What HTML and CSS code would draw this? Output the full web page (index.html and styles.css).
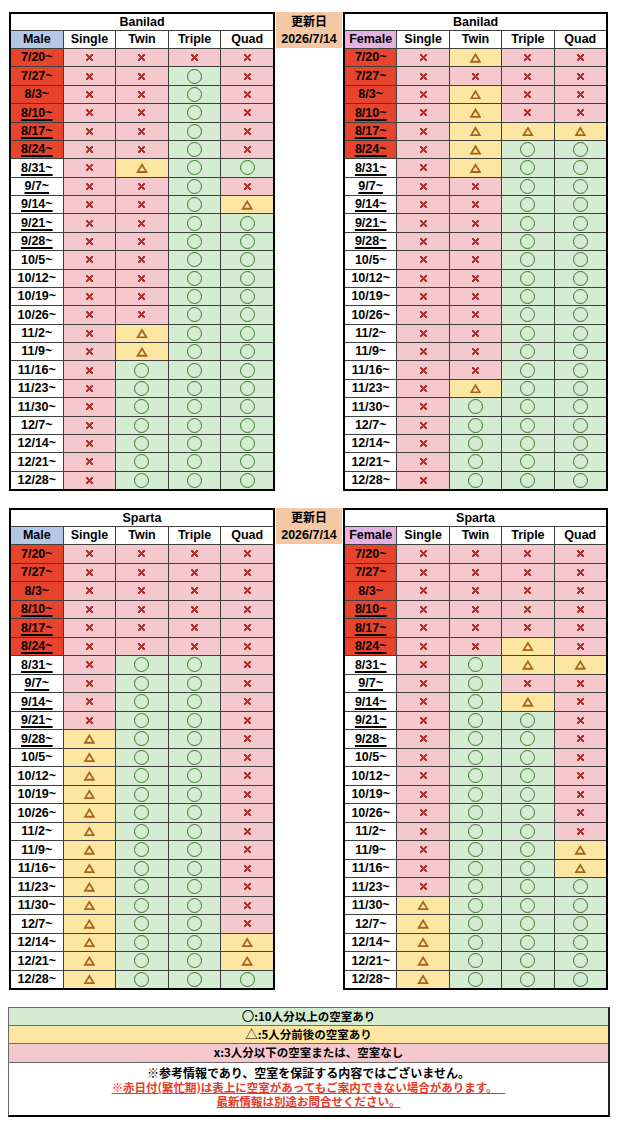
FILE: index.html
```html
<!DOCTYPE html>
<html lang="ja">
<head>
<meta charset="utf-8">
<title>空室状況</title>
<link rel="stylesheet" href="styles.css">
</head>
<body>
<div class="page">
  <div class="sec">
    <div class="tbl">
      <b class="ttl">Banilad</b>
      <b class="male">Male</b><b>Single</b><b>Twin</b><b>Triple</b><b>Quad</b>
      <b class="d rd">7/20~</b><i class="x"></i><i class="x"></i><i class="x"></i><i class="x"></i>
      <b class="d rd">7/27~</b><i class="x"></i><i class="x"></i><i class="o"></i><i class="x"></i>
      <b class="d rd">8/3~</b><i class="x"></i><i class="x"></i><i class="o"></i><i class="x"></i>
      <b class="d rd u">8/10~</b><i class="x"></i><i class="x"></i><i class="o"></i><i class="x"></i>
      <b class="d rd u">8/17~</b><i class="x"></i><i class="x"></i><i class="o"></i><i class="x"></i>
      <b class="d rd u">8/24~</b><i class="x"></i><i class="x"></i><i class="o"></i><i class="x"></i>
      <b class="d u">8/31~</b><i class="x"></i><i class="t"></i><i class="o"></i><i class="o"></i>
      <b class="d u">9/7~</b><i class="x"></i><i class="x"></i><i class="o"></i><i class="x"></i>
      <b class="d u">9/14~</b><i class="x"></i><i class="x"></i><i class="o"></i><i class="t"></i>
      <b class="d u">9/21~</b><i class="x"></i><i class="x"></i><i class="o"></i><i class="o"></i>
      <b class="d u">9/28~</b><i class="x"></i><i class="x"></i><i class="o"></i><i class="o"></i>
      <b class="d">10/5~</b><i class="x"></i><i class="x"></i><i class="o"></i><i class="o"></i>
      <b class="d">10/12~</b><i class="x"></i><i class="x"></i><i class="o"></i><i class="o"></i>
      <b class="d">10/19~</b><i class="x"></i><i class="x"></i><i class="o"></i><i class="o"></i>
      <b class="d">10/26~</b><i class="x"></i><i class="x"></i><i class="o"></i><i class="o"></i>
      <b class="d">11/2~</b><i class="x"></i><i class="t"></i><i class="o"></i><i class="o"></i>
      <b class="d">11/9~</b><i class="x"></i><i class="t"></i><i class="o"></i><i class="o"></i>
      <b class="d">11/16~</b><i class="x"></i><i class="o"></i><i class="o"></i><i class="o"></i>
      <b class="d">11/23~</b><i class="x"></i><i class="o"></i><i class="o"></i><i class="o"></i>
      <b class="d">11/30~</b><i class="x"></i><i class="o"></i><i class="o"></i><i class="o"></i>
      <b class="d">12/7~</b><i class="x"></i><i class="o"></i><i class="o"></i><i class="o"></i>
      <b class="d">12/14~</b><i class="x"></i><i class="o"></i><i class="o"></i><i class="o"></i>
      <b class="d">12/21~</b><i class="x"></i><i class="o"></i><i class="o"></i><i class="o"></i>
      <b class="d">12/28~</b><i class="x"></i><i class="o"></i><i class="o"></i><i class="o"></i>
    </div>
    <div class="upd"><span class="jp">更新日</span><span>2026/7/14</span></div>
    <div class="tbl rt">
      <b class="ttl">Banilad</b>
      <b class="female">Female</b><b>Single</b><b>Twin</b><b>Triple</b><b>Quad</b>
      <b class="d rd">7/20~</b><i class="x"></i><i class="t"></i><i class="x"></i><i class="x"></i>
      <b class="d rd">7/27~</b><i class="x"></i><i class="x"></i><i class="x"></i><i class="x"></i>
      <b class="d rd">8/3~</b><i class="x"></i><i class="t"></i><i class="x"></i><i class="x"></i>
      <b class="d rd u">8/10~</b><i class="x"></i><i class="t"></i><i class="x"></i><i class="x"></i>
      <b class="d rd u">8/17~</b><i class="x"></i><i class="t"></i><i class="t"></i><i class="t"></i>
      <b class="d rd u">8/24~</b><i class="x"></i><i class="t"></i><i class="o"></i><i class="o"></i>
      <b class="d u">8/31~</b><i class="x"></i><i class="t"></i><i class="o"></i><i class="o"></i>
      <b class="d u">9/7~</b><i class="x"></i><i class="x"></i><i class="o"></i><i class="o"></i>
      <b class="d u">9/14~</b><i class="x"></i><i class="x"></i><i class="o"></i><i class="o"></i>
      <b class="d u">9/21~</b><i class="x"></i><i class="x"></i><i class="o"></i><i class="o"></i>
      <b class="d u">9/28~</b><i class="x"></i><i class="x"></i><i class="o"></i><i class="o"></i>
      <b class="d">10/5~</b><i class="x"></i><i class="x"></i><i class="o"></i><i class="o"></i>
      <b class="d">10/12~</b><i class="x"></i><i class="x"></i><i class="o"></i><i class="o"></i>
      <b class="d">10/19~</b><i class="x"></i><i class="x"></i><i class="o"></i><i class="o"></i>
      <b class="d">10/26~</b><i class="x"></i><i class="x"></i><i class="o"></i><i class="o"></i>
      <b class="d">11/2~</b><i class="x"></i><i class="x"></i><i class="o"></i><i class="o"></i>
      <b class="d">11/9~</b><i class="x"></i><i class="x"></i><i class="o"></i><i class="o"></i>
      <b class="d">11/16~</b><i class="x"></i><i class="x"></i><i class="o"></i><i class="o"></i>
      <b class="d">11/23~</b><i class="x"></i><i class="t"></i><i class="o"></i><i class="o"></i>
      <b class="d">11/30~</b><i class="x"></i><i class="o"></i><i class="o"></i><i class="o"></i>
      <b class="d">12/7~</b><i class="x"></i><i class="o"></i><i class="o"></i><i class="o"></i>
      <b class="d">12/14~</b><i class="x"></i><i class="o"></i><i class="o"></i><i class="o"></i>
      <b class="d">12/21~</b><i class="x"></i><i class="o"></i><i class="o"></i><i class="o"></i>
      <b class="d">12/28~</b><i class="x"></i><i class="o"></i><i class="o"></i><i class="o"></i>
    </div>
  </div>

  <div class="sec sec2">
    <div class="tbl">
      <b class="ttl">Sparta</b>
      <b class="male">Male</b><b>Single</b><b>Twin</b><b>Triple</b><b>Quad</b>
      <b class="d rd">7/20~</b><i class="x"></i><i class="x"></i><i class="x"></i><i class="x"></i>
      <b class="d rd">7/27~</b><i class="x"></i><i class="x"></i><i class="x"></i><i class="x"></i>
      <b class="d rd">8/3~</b><i class="x"></i><i class="x"></i><i class="x"></i><i class="x"></i>
      <b class="d rd u">8/10~</b><i class="x"></i><i class="x"></i><i class="x"></i><i class="x"></i>
      <b class="d rd u">8/17~</b><i class="x"></i><i class="x"></i><i class="x"></i><i class="x"></i>
      <b class="d rd u">8/24~</b><i class="x"></i><i class="x"></i><i class="x"></i><i class="x"></i>
      <b class="d u">8/31~</b><i class="x"></i><i class="o"></i><i class="o"></i><i class="x"></i>
      <b class="d u">9/7~</b><i class="x"></i><i class="o"></i><i class="o"></i><i class="x"></i>
      <b class="d u">9/14~</b><i class="x"></i><i class="o"></i><i class="o"></i><i class="x"></i>
      <b class="d u">9/21~</b><i class="x"></i><i class="o"></i><i class="o"></i><i class="x"></i>
      <b class="d u">9/28~</b><i class="t"></i><i class="o"></i><i class="o"></i><i class="x"></i>
      <b class="d">10/5~</b><i class="t"></i><i class="o"></i><i class="o"></i><i class="x"></i>
      <b class="d">10/12~</b><i class="t"></i><i class="o"></i><i class="o"></i><i class="x"></i>
      <b class="d">10/19~</b><i class="t"></i><i class="o"></i><i class="o"></i><i class="x"></i>
      <b class="d">10/26~</b><i class="t"></i><i class="o"></i><i class="o"></i><i class="x"></i>
      <b class="d">11/2~</b><i class="t"></i><i class="o"></i><i class="o"></i><i class="x"></i>
      <b class="d">11/9~</b><i class="t"></i><i class="o"></i><i class="o"></i><i class="x"></i>
      <b class="d">11/16~</b><i class="t"></i><i class="o"></i><i class="o"></i><i class="x"></i>
      <b class="d">11/23~</b><i class="t"></i><i class="o"></i><i class="o"></i><i class="x"></i>
      <b class="d">11/30~</b><i class="t"></i><i class="o"></i><i class="o"></i><i class="x"></i>
      <b class="d">12/7~</b><i class="t"></i><i class="o"></i><i class="o"></i><i class="x"></i>
      <b class="d">12/14~</b><i class="t"></i><i class="o"></i><i class="o"></i><i class="t"></i>
      <b class="d">12/21~</b><i class="t"></i><i class="o"></i><i class="o"></i><i class="t"></i>
      <b class="d">12/28~</b><i class="t"></i><i class="o"></i><i class="o"></i><i class="o"></i>
    </div>
    <div class="upd"><span class="jp">更新日</span><span>2026/7/14</span></div>
    <div class="tbl rt">
      <b class="ttl">Sparta</b>
      <b class="female">Female</b><b>Single</b><b>Twin</b><b>Triple</b><b>Quad</b>
      <b class="d rd">7/20~</b><i class="x"></i><i class="x"></i><i class="x"></i><i class="x"></i>
      <b class="d rd">7/27~</b><i class="x"></i><i class="x"></i><i class="x"></i><i class="x"></i>
      <b class="d rd">8/3~</b><i class="x"></i><i class="x"></i><i class="x"></i><i class="x"></i>
      <b class="d rd u">8/10~</b><i class="x"></i><i class="x"></i><i class="x"></i><i class="x"></i>
      <b class="d rd u">8/17~</b><i class="x"></i><i class="x"></i><i class="x"></i><i class="x"></i>
      <b class="d rd u">8/24~</b><i class="x"></i><i class="x"></i><i class="t"></i><i class="x"></i>
      <b class="d u">8/31~</b><i class="x"></i><i class="o"></i><i class="t"></i><i class="t"></i>
      <b class="d u">9/7~</b><i class="x"></i><i class="o"></i><i class="x"></i><i class="x"></i>
      <b class="d u">9/14~</b><i class="x"></i><i class="o"></i><i class="t"></i><i class="x"></i>
      <b class="d u">9/21~</b><i class="x"></i><i class="o"></i><i class="o"></i><i class="x"></i>
      <b class="d u">9/28~</b><i class="x"></i><i class="o"></i><i class="o"></i><i class="x"></i>
      <b class="d">10/5~</b><i class="x"></i><i class="o"></i><i class="o"></i><i class="x"></i>
      <b class="d">10/12~</b><i class="x"></i><i class="o"></i><i class="o"></i><i class="x"></i>
      <b class="d">10/19~</b><i class="x"></i><i class="o"></i><i class="o"></i><i class="x"></i>
      <b class="d">10/26~</b><i class="x"></i><i class="o"></i><i class="o"></i><i class="x"></i>
      <b class="d">11/2~</b><i class="x"></i><i class="o"></i><i class="o"></i><i class="x"></i>
      <b class="d">11/9~</b><i class="x"></i><i class="o"></i><i class="o"></i><i class="t"></i>
      <b class="d">11/16~</b><i class="x"></i><i class="o"></i><i class="o"></i><i class="t"></i>
      <b class="d">11/23~</b><i class="x"></i><i class="o"></i><i class="o"></i><i class="o"></i>
      <b class="d">11/30~</b><i class="t"></i><i class="o"></i><i class="o"></i><i class="o"></i>
      <b class="d">12/7~</b><i class="t"></i><i class="o"></i><i class="o"></i><i class="o"></i>
      <b class="d">12/14~</b><i class="t"></i><i class="o"></i><i class="o"></i><i class="o"></i>
      <b class="d">12/21~</b><i class="t"></i><i class="o"></i><i class="o"></i><i class="o"></i>
      <b class="d">12/28~</b><i class="t"></i><i class="o"></i><i class="o"></i><i class="o"></i>
    </div>
  </div>

  <div class="foot">
    <div class="lg lg-o"><span class="sym">〇</span>:10人分以上の空室あり</div>
    <div class="lg lg-t"><span class="sym">△</span>:5人分前後の空室あり</div>
    <div class="lg lg-x">x:3人分以下の空室または、空室なし</div>
    <div class="note">
      <p class="blk">※参考情報であり、空室を保証する内容ではございません。</p>
      <p class="red"><span class="pre">※赤日付(繁忙期)は表上に空室があってもご案内できない場合があります。   </span></p>
      <p class="red">最新情報は別途お問合せください。</p>
    </div>
  </div>
</div>
</body>
</html>
```

FILE: styles.css
```css
* { box-sizing: border-box; margin: 0; padding: 0; }

body {
  margin: 0;
  background: #fff;
  color: #000;
  font-family: "Liberation Sans", Arial, "Noto Sans CJK JP", sans-serif;
}

.page {
  padding: 12px 0 0 9px;
  display: flex;
  flex-direction: column;
  gap: 17px;
}

.sec {
  display: flex;
  align-items: flex-start;
  gap: 1px;
}

.tbl {
  width: 266px;
  height: 479px;
  border: 2px solid #000;
  background: #3f3f3f;
  display: grid;
  grid-template-columns: repeat(5, 1fr);
  grid-template-rows: 16px 17px repeat(24, 1fr);
  gap: 1px;
}

.sec2 .tbl { height: 482px; }

.tbl.rt { width: 265px; }

.tbl > b,
.tbl > i {
  display: flex;
  align-items: center;
  justify-content: center;
  font-weight: bold;
  font-style: normal;
  font-size: 12.5px;
  background: #fff;
  line-height: 1;
}

.tbl > .ttl { grid-column: 1 / -1; }
.tbl > .male { background: #b4c7e7; }
.tbl > .female { background: #e4b2e2; }
.tbl > .rd { background: #e8432c; }

.tbl > .u {
  text-decoration: underline;
  text-decoration-thickness: 1.5px;
  text-underline-offset: 1.5px;
}

.tbl > .x { background: #f4c8cc; }
.tbl > .t { background: #fde6a1; }
.tbl > .o { background: #d4ecd1; }

.x::before {
  content: "";
  width: 7px;
  height: 7px;
  background:
    linear-gradient(45deg, transparent 37%, #b3302c 37%, #b3302c 63%, transparent 63%),
    linear-gradient(-45deg, transparent 37%, #b3302c 37%, #b3302c 63%, transparent 63%);
}

.t::before {
  content: "";
  width: 12px;
  height: 10px;
  background: #a5651d;
  clip-path: polygon(evenodd, 50% 0, 100% 100%, 0 100%, 50% 0, 50% 36%, 26% 81%, 74% 81%, 50% 36%);
}

.o::before {
  content: "";
  width: 13px;
  height: 13px;
  border: 1.2px solid #3a772c;
  border-radius: 50%;
}

.upd {
  width: 66px;
  height: 36px;
  background: #f5c8a3;
  display: flex;
  flex-direction: column;
  align-items: center;
  justify-content: space-around;
  font-weight: bold;
  font-size: 12.5px;
  line-height: 1;
}

.upd .jp { font-family: "Noto Sans CJK JP", sans-serif; font-size: 12px; }

.foot {
  width: 602px;
  margin-left: -1px;
  border: 1px solid #6a6a6a;
  border-right: 2px solid #222;
  border-bottom: 2px solid #000;
  font-family: "Noto Sans CJK JP", "Liberation Sans", sans-serif;
  font-weight: bold;
}

.lg {
  height: 18px;
  display: flex;
  align-items: center;
  justify-content: center;
  font-size: 11.5px;
  line-height: 1;
  border-bottom: 1px solid #6a6a6a;
}

.lg .sym { font-size: 12.5px; font-weight: normal; }

.lg-o { background: #d4ecd1; }
.lg-t { background: #fde6a1; }
.lg-x { background: #f4c8cc; height: 19px; }

.note {
  height: 52px;
  padding-top: 2px;
  text-align: center;
}

.blk {
  font-size: 12px;
  line-height: 15px;
}

.red {
  font-size: 11.5px;
  line-height: 14px;
  color: #e8392a;
  text-decoration: underline;
  text-decoration-thickness: 1px;
}

.pre { white-space: pre; }
```
